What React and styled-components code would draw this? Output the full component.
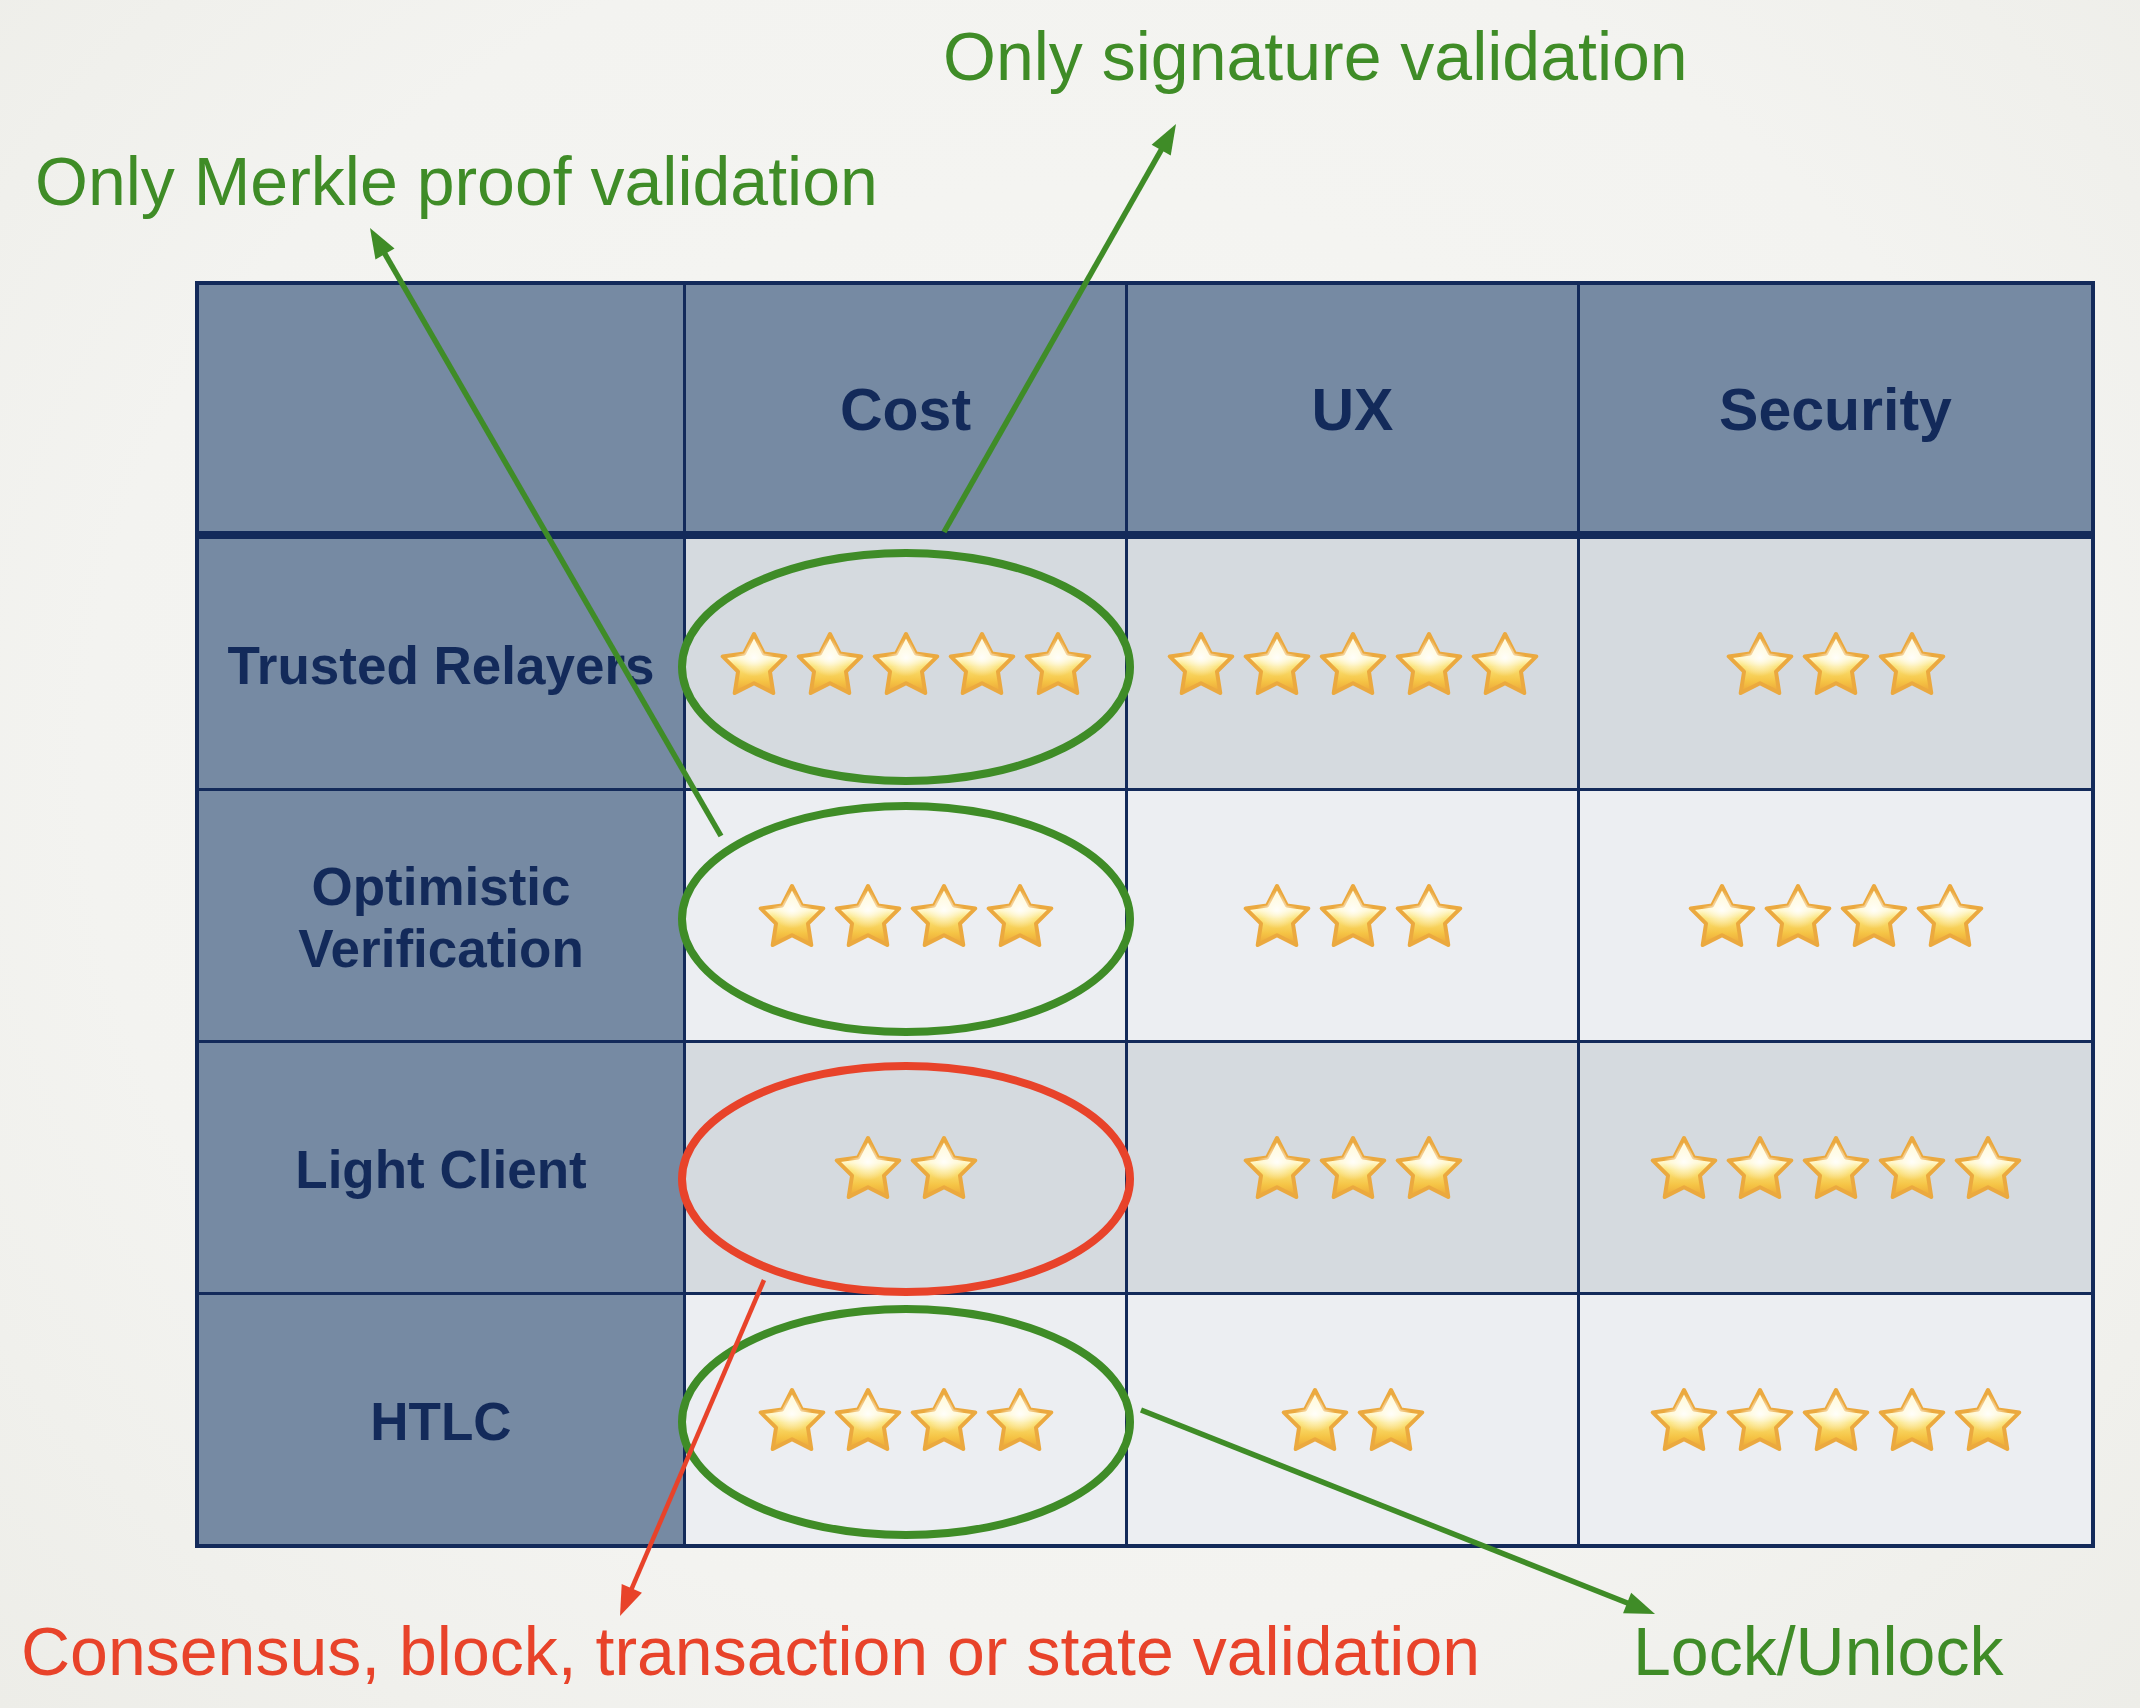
import React, { useId } from "react";
import styled, { createGlobalStyle } from "styled-components";

const NAVY = "#132a5a";
const GREEN = "#3f8c27";
const RED = "#e8432a";

const GlobalStyle = createGlobalStyle`
  html, body { margin: 0; padding: 0; background: #f3f3f0; }
  body { font-family: "Liberation Sans", Arial, Helvetica, sans-serif; }
  #root { width: 2140px; height: 1708px; }
`;

const Slide = styled.div`
  position: relative;
  width: 2140px;
  height: 1708px;
  overflow: hidden;
  display: flex;
  flex-direction: column;
  background:
    radial-gradient(ellipse at 50% 45%, #f6f6f3 0%, #f3f3f0 65%, #ededE8 100%);
`;

const TopNotes = styled.div`
  display: flex;
  flex-direction: column;
  align-items: flex-start;
  gap: 57px;
  padding-top: 22px;
`;

const BottomNotes = styled.div`
  display: grid;
  grid-template-columns: 1612px auto;
  padding-left: 21px;
  margin-top: 69px;
`;

const Note = styled.div`
  font-family: "Liberation Sans", Arial, sans-serif;
  font-size: 68px;
  line-height: 68px;
  white-space: nowrap;
  color: ${(p) => (p.$tone === "red" ? RED : GREEN)};
  margin-left: ${(p) => p.$indent || 0}px;
`;

const Grid = styled.div`
  box-sizing: border-box;
  margin: 66px 0 0 195px;
  width: 1900px;
  display: grid;
  grid-template-columns: 484px 439px 449px 511px;
  grid-template-rows: 251px repeat(4, 249px);
  gap: 3px;
  padding: 4px;
  background: ${NAVY};
`;

const HeadCell = styled.div`
  box-sizing: border-box;
  background: #768aa3;
  border-bottom: 5px solid ${NAVY};
  display: flex;
  align-items: center;
  justify-content: center;
  color: ${NAVY};
  font-weight: 700;
  font-size: 59px;
  padding-top: 4px;
`;

const LabelCell = styled.div`
  background: #768aa3;
  display: flex;
  align-items: center;
  justify-content: center;
  text-align: center;
  color: ${NAVY};
  font-weight: 700;
  font-size: 53px;
  line-height: 1.16;
  padding-top: 4px;
`;

const RatingCell = styled.div`
  background: ${(p) => (p.$shade ? "#d5dadf" : "#eceef2")};
  display: flex;
  align-items: center;
  justify-content: center;
  gap: 6px;
`;

const StarSvg = styled.svg`
  width: 70px;
  height: 66px;
  display: block;
  flex: none;
`;

const Overlay = styled.svg`
  position: absolute;
  left: 0;
  top: 0;
  width: 2140px;
  height: 1708px;
  pointer-events: none;
`;

const STAR_PATH =
  "M35 3 L44.87 22.4 L66.3 25.4 L50.98 40.69 L54.3 62 L35 52.3 L15.7 62 L19.02 40.69 L3.7 25.4 L25.13 22.4 Z";

function Star() {
  const id = useId().replace(/:/g, "");
  return (
    <StarSvg viewBox="0 0 70 66" aria-hidden="true">
      <defs>
        <linearGradient id={`f${id}`} x1="0" y1="0" x2="0" y2="1">
          <stop offset="0" stopColor="#fffbe2" />
          <stop offset="0.42" stopColor="#fff7c8" />
          <stop offset="0.55" stopColor="#fbe377" />
          <stop offset="0.8" stopColor="#f5c445" />
          <stop offset="1" stopColor="#eca438" />
        </linearGradient>
        <radialGradient id={`h${id}`} cx="0.5" cy="0.4" r="0.32">
          <stop offset="0" stopColor="#ffffff" stopOpacity="0.9" />
          <stop offset="1" stopColor="#ffffff" stopOpacity="0" />
        </radialGradient>
      </defs>
      <path
        d={STAR_PATH}
        fill={`url(#f${id})`}
        stroke="#eba93f"
        strokeWidth="4"
        strokeLinejoin="round"
      />
      <path d={STAR_PATH} fill={`url(#h${id})`} />
    </StarSvg>
  );
}

function Rating({ count, shade }) {
  return (
    <RatingCell $shade={shade}>
      {Array.from({ length: count }, (_, i) => (
        <Star key={i} />
      ))}
    </RatingCell>
  );
}

function Arrow({ from, to, color, width, len = 30, half = 11 }) {
  const [x1, y1] = from;
  const [x2, y2] = to;
  const dx = x2 - x1;
  const dy = y2 - y1;
  const L = Math.hypot(dx, dy);
  const ux = dx / L;
  const uy = dy / L;
  const bx = x2 - ux * len;
  const by = y2 - uy * len;
  const nx = -uy;
  const ny = ux;
  const pts = `${x2},${y2} ${bx + nx * half},${by + ny * half} ${bx - nx * half},${by - ny * half}`;
  return (
    <g>
      <line x1={x1} y1={y1} x2={bx + ux * 3} y2={by + uy * 3} stroke={color} strokeWidth={width} />
      <polygon points={pts} fill={color} />
    </g>
  );
}

const rows = [
  { label: "Trusted Relayers", stars: [5, 5, 3], shade: true },
  { label: ["Optimistic", "Verification"], stars: [4, 3, 4], shade: false },
  { label: "Light Client", stars: [2, 3, 5], shade: true },
  { label: "HTLC", stars: [4, 2, 5], shade: false },
];

export default function App() {
  return (
    <>
      <GlobalStyle />
      <Slide>
        <TopNotes>
          <Note $indent={943}>Only signature validation</Note>
          <Note $indent={35}>Only Merkle proof validation</Note>
        </TopNotes>

        <Grid>
          <HeadCell />
          <HeadCell>Cost</HeadCell>
          <HeadCell>UX</HeadCell>
          <HeadCell>Security</HeadCell>
          {rows.map((r, i) => (
            <React.Fragment key={i}>
              <LabelCell>
                {Array.isArray(r.label) ? (
                  <div>
                    {r.label[0]}
                    <br />
                    {r.label[1]}
                  </div>
                ) : (
                  r.label
                )}
              </LabelCell>
              {r.stars.map((n, j) => (
                <Rating key={j} count={n} shade={r.shade} />
              ))}
            </React.Fragment>
          ))}
        </Grid>

        <BottomNotes>
          <Note $tone="red">Consensus, block, transaction or state validation</Note>
          <Note>Lock/Unlock</Note>
        </BottomNotes>

        <Overlay viewBox="0 0 2140 1708">
          <ellipse cx="906" cy="667" rx="224" ry="114" fill="none" stroke={GREEN} strokeWidth="8" />
          <ellipse cx="906" cy="919" rx="224" ry="113" fill="none" stroke={GREEN} strokeWidth="8" />
          <ellipse cx="906" cy="1179" rx="224" ry="113" fill="none" stroke={RED} strokeWidth="8" />
          <ellipse cx="906" cy="1422" rx="224" ry="113" fill="none" stroke={GREEN} strokeWidth="8" />
          <Arrow from={[944, 532]} to={[1176, 124]} color={GREEN} width={5.5} />
          <Arrow from={[721, 836]} to={[370, 228]} color={GREEN} width={5.5} />
          <Arrow from={[764, 1280]} to={[620, 1616]} color={RED} width={4.5} />
          <Arrow from={[1141, 1410]} to={[1655, 1614]} color={GREEN} width={5.5} />
        </Overlay>
      </Slide>
    </>
  );
}
